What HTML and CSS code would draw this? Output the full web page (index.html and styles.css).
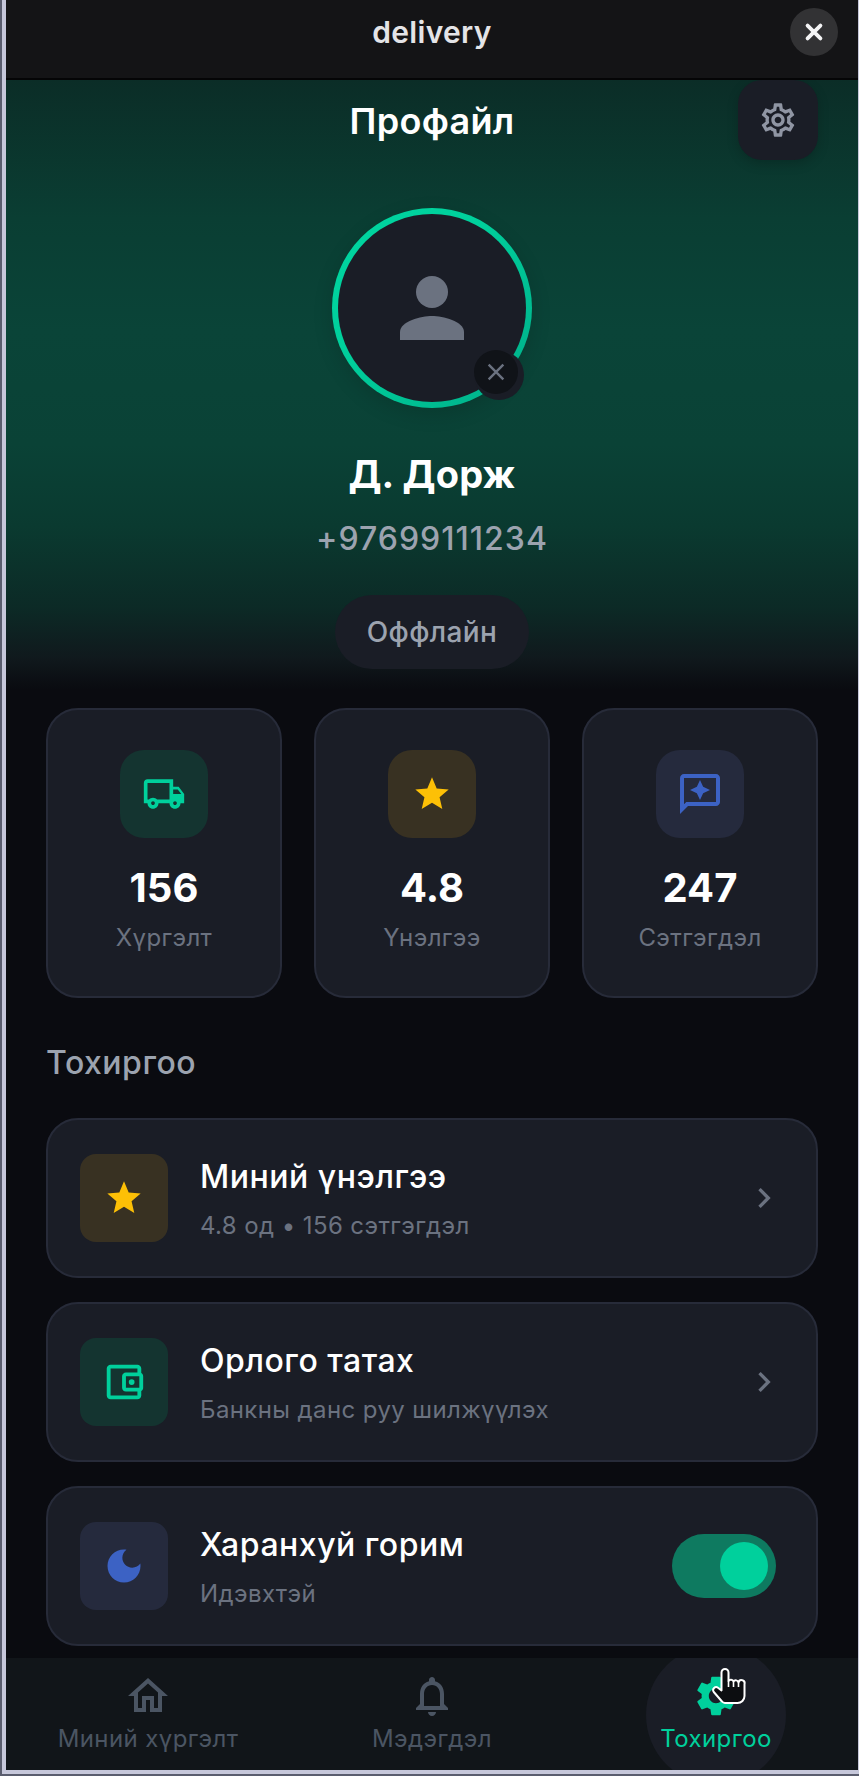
FILE: index.html
```html
<!DOCTYPE html>
<html lang="mn">
<head>
<meta charset="utf-8">
<title>delivery</title>
<link rel="stylesheet" href="styles.css">
</head>
<body>
<div class="window">
  <div class="app">
    <header class="topbar">
      <span class="topbar-title">delivery</span>
      <button class="close-btn" aria-label="close">
        <svg viewBox="0 0 24 24" class="close-icon"><path d="M5 5l14 14M19 5L5 19"/></svg>
      </button>
    </header>
    <main class="main">
      <section class="hero">
        <div class="hero-bar">
          <h1 class="hero-title">Профайл</h1>
          <button class="settings-btn" aria-label="settings">
            <svg viewBox="0 0 24 24" class="icon-40 fill-gray"><path d="M19.43 12.98c.04-.32.07-.64.07-.98 0-.34-.03-.66-.07-.98l2.11-1.65c.19-.15.24-.42.12-.64l-2-3.46c-.09-.16-.26-.25-.44-.25-.06 0-.12.01-.17.03l-2.49 1c-.52-.4-1.08-.73-1.69-.98l-.38-2.65C14.46 2.18 14.25 2 14 2h-4c-.25 0-.46.18-.49.42l-.38 2.65c-.61.25-1.17.59-1.69.98l-2.49-1c-.06-.02-.12-.03-.18-.03-.17 0-.34.09-.43.25l-2 3.46c-.13.22-.07.49.12.64l2.11 1.65c-.04.32-.07.65-.07.98 0 .33.03.66.07.98l-2.11 1.65c-.19.15-.24.42-.12.64l2 3.46c.09.16.26.25.44.25.06 0 .12-.01.17-.03l2.49-1c.52.4 1.08.73 1.69.98l.38 2.65c.03.24.24.42.49.42h4c.25 0 .46-.18.49-.42l.38-2.65c.61-.25 1.17-.59 1.69-.98l2.49 1c.06.02.12.03.18.03.17 0 .34-.09.43-.25l2-3.46c.12-.22.07-.49-.12-.64l-2.11-1.65zm-1.98-1.71c.04.31.05.52.05.73 0 .21-.02.43-.05.73l-.14 1.13.89.7 1.08.84-.7 1.21-1.27-.51-1.04-.42-.9.68c-.43.32-.84.56-1.25.73l-1.06.43-.16 1.13-.2 1.35h-1.4l-.19-1.35-.16-1.13-1.06-.43c-.43-.18-.83-.41-1.23-.71l-.91-.7-1.06.43-1.27.51-.7-1.21 1.08-.84.89-.7-.14-1.13c-.03-.31-.05-.54-.05-.74s.02-.43.05-.73l.14-1.13-.89-.7-1.08-.84.7-1.21 1.27.51 1.04.42.9-.68c.43-.32.84-.56 1.25-.73l1.06-.43.16-1.13.2-1.35h1.39l.19 1.35.16 1.13 1.06.43c.43.18.83.41 1.23.71l.91.7 1.06-.43 1.27-.51.7 1.21-1.07.85-.89.7.14 1.13zM12 8c-2.21 0-4 1.79-4 4s1.79 4 4 4 4-1.79 4-4-1.79-4-4-4zm0 6c-1.1 0-2-.9-2-2s.9-2 2-2 2 .9 2 2-.9 2-2 2z"/></svg>
          </button>
        </div>
        <div class="avatar">
          <div class="avatar-inner">
            <svg viewBox="0 0 24 24" class="icon-96"><circle cx="12" cy="8" r="4"/><path d="M4 20v-2c0-2.66 5.33-4 8-4s8 1.34 8 4v2z"/></svg>
          </div>
          <div class="avatar-badge">
            <div class="avatar-badge-inner">
              <svg viewBox="0 0 24 24" class="badge-icon"><path d="M4 4l16 16M20 4L4 20"/></svg>
            </div>
          </div>
        </div>
        <h2 class="name">Д. Дорж</h2>
        <p class="phone">+97699111234</p>
        <div class="status-pill">Оффлайн</div>
      </section>

      <section class="stats">
        <article class="stat-card">
          <div class="icon-box tint-green">
            <svg viewBox="0 0 24 24" class="icon-44 fill-green"><path d="M20 8h-3V4H3c-1.1 0-2 .9-2 2v11h2c0 1.66 1.34 3 3 3s3-1.34 3-3h6c0 1.66 1.34 3 3 3s3-1.34 3-3h2v-5l-3-4zm-.5 1.5l1.96 2.5H17V9.5h2.5zM6 18c-.55 0-1-.45-1-1s.45-1 1-1 1 .45 1 1-.45 1-1 1zm2.22-3c-.55-.61-1.33-1-2.22-1s-1.67.39-2.22 1H3V6h12v9H8.22zM18 18c-.55 0-1-.45-1-1s.45-1 1-1 1 .45 1 1-.45 1-1 1z"/></svg>
          </div>
          <div class="stat-value">156</div>
          <div class="stat-label">Хүргэлт</div>
        </article>
        <article class="stat-card">
          <div class="icon-box tint-amber">
            <svg viewBox="0 0 24 24" class="icon-40 fill-amber"><path d="M12 17.27L18.18 21l-1.64-7.03L22 9.24l-7.19-.61L12 2 9.19 8.63 2 9.24l5.46 4.73L5.82 21z"/></svg>
          </div>
          <div class="stat-value">4.8</div>
          <div class="stat-label">Үнэлгээ</div>
        </article>
        <article class="stat-card">
          <div class="icon-box tint-blue">
            <svg viewBox="0 0 24 24" class="icon-48 fill-blue"><path d="M20 4v12H5.17L4 17.17V4h16m0-2H4c-1.1 0-1.99.9-1.99 2L2 22l4-4h14c1.1 0 2-.9 2-2V4c0-1.1-.9-2-2-2z"/><path d="M12 15l1.57-3.43L17 10l-3.43-1.57L12 5l-1.57 3.43L7 10l3.43 1.57z"/></svg>
          </div>
          <div class="stat-value">247</div>
          <div class="stat-label">Сэтгэгдэл</div>
        </article>
      </section>

      <h3 class="section-title">Тохиргоо</h3>

      <section class="list">
        <article class="row">
          <div class="icon-box tint-amber">
            <svg viewBox="0 0 24 24" class="icon-40 fill-amber"><path d="M12 17.27L18.18 21l-1.64-7.03L22 9.24l-7.19-.61L12 2 9.19 8.63 2 9.24l5.46 4.73L5.82 21z"/></svg>
          </div>
          <div class="row-text">
            <div class="row-title">Миний үнэлгээ</div>
            <div class="row-sub">4.8 од • 156 сэтгэгдэл</div>
          </div>
          <svg viewBox="0 0 24 24" class="icon-40 fill-muted"><path d="M10 6L8.59 7.41 13.17 12l-4.58 4.59L10 18l6-6z"/></svg>
        </article>
        <article class="row">
          <div class="icon-box tint-green">
            <svg viewBox="0 0 24 24" class="icon-46 fill-green"><path d="M21 7.28V5c0-1.1-.9-2-2-2H5c-1.11 0-2 .9-2 2v14c0 1.1.89 2 2 2h14c1.1 0 2-.9 2-2v-2.28c.59-.35 1-.98 1-1.72V9c0-.74-.41-1.38-1-1.72zM20 9v6h-7V9h7zM5 19V5h14v2h-6c-1.1 0-2 .9-2 2v6c0 1.1.9 2 2 2h6v2H5z"/><circle cx="16" cy="12" r="1.5"/></svg>
          </div>
          <div class="row-text">
            <div class="row-title">Орлого татах</div>
            <div class="row-sub">Банкны данс руу шилжүүлэх</div>
          </div>
          <svg viewBox="0 0 24 24" class="icon-40 fill-muted"><path d="M10 6L8.59 7.41 13.17 12l-4.58 4.59L10 18l6-6z"/></svg>
        </article>
        <article class="row">
          <div class="icon-box tint-blue">
            <svg viewBox="0 0 24 24" class="icon-44 fill-blue"><path d="M12 3c-4.97 0-9 4.03-9 9s4.03 9 9 9 9-4.03 9-9c0-.46-.04-.92-.1-1.36-.98 1.37-2.58 2.26-4.4 2.26-2.98 0-5.4-2.42-5.4-5.4 0-1.81.89-3.42 2.26-4.4-.44-.06-.9-.1-1.36-.1z"/></svg>
          </div>
          <div class="row-text">
            <div class="row-title">Харанхуй горим</div>
            <div class="row-sub">Идэвхтэй</div>
          </div>
          <div class="toggle"><div class="toggle-thumb"></div></div>
        </article>
      </section>
    </main>

    <nav class="nav">
      <div class="nav-item">
        <svg viewBox="0 0 24 24" class="icon-48 fill-nav"><path d="M12 5.69l5 4.5V18h-2v-6H9v6H7v-7.81l5-4.5M12 3L2 12h3v8h6v-6h2v6h6v-8h3L12 3z"/></svg>
        <span class="nav-label">Миний хүргэлт</span>
      </div>
      <div class="nav-item">
        <svg viewBox="0 0 24 24" class="icon-48 fill-nav"><path d="M12 22c1.1 0 2-.9 2-2h-4c0 1.1.9 2 2 2zm6-6v-5c0-3.07-1.63-5.64-4.5-6.32V4c0-.83-.67-1.5-1.5-1.5s-1.5.67-1.5 1.5v.68C7.64 5.36 6 7.92 6 11v5l-2 2v1h16v-1l-2-2zm-2 1H8v-6c0-2.48 1.51-4.5 4-4.5s4 2.02 4 4.5v6z"/></svg>
        <span class="nav-label">Мэдэгдэл</span>
      </div>
      <div class="nav-item nav-item-active">
        <div class="nav-bubble"></div>
        <svg viewBox="0 0 24 24" class="icon-48 fill-green nav-content"><path d="M19.14 12.94c.04-.3.06-.61.06-.94 0-.32-.02-.64-.07-.94l2.03-1.58c.18-.14.23-.41.12-.61l-1.92-3.32c-.12-.22-.37-.29-.59-.22l-2.39.96c-.5-.38-1.03-.7-1.62-.94l-.36-2.54c-.04-.24-.24-.41-.48-.41h-3.84c-.24 0-.43.17-.47.41l-.36 2.54c-.59.24-1.13.57-1.62.94l-2.39-.96c-.22-.08-.47 0-.59.22L2.74 8.87c-.12.21-.08.47.12.61l2.03 1.58c-.05.3-.09.63-.09.94s.02.64.07.94l-2.03 1.58c-.18.14-.23.41-.12.61l1.92 3.32c.12.22.37.29.59.22l2.39-.96c.5.38 1.03.7 1.62.94l.36 2.54c.05.24.24.41.48.41h3.84c.24 0 .44-.17.47-.41l.36-2.54c.59-.24 1.13-.56 1.62-.94l2.39.96c.22.08.47 0 .59-.22l1.92-3.32c.12-.22.07-.47-.12-.61l-2.01-1.58zM12 15.6c-1.98 0-3.6-1.62-3.6-3.6s1.62-3.6 3.6-3.6 3.6 1.62 3.6 3.6-1.62 3.6-3.6 3.6z"/></svg>
        <span class="nav-label nav-content">Тохиргоо</span>
        <svg viewBox="0 0 36 37" class="cursor"><path d="M9.5 4.5a3.5 3.5 0 0 1 7 0v8.5a2.8 2.8 0 0 1 5 .5a2.8 2.8 0 0 1 5 1a2.8 2.8 0 0 1 6 1.5V28a7 7 0 0 1-7 7H13a4 4 0 0 1-3-1.5L1.8 24a3 3 0 0 1 4.2-4.2l3.5 2.7z"/><path class="cursor-knuckle" d="M16.5 13v6M21.5 13.5V19M26.5 14.5V19"/></svg>
      </div>
    </nav>
  </div>
</div>
</body>
</html>
```

FILE: styles.css
```css
* { box-sizing: border-box; }
html, body { margin: 0; padding: 0; height: 100%; background: #5a5d6e; overflow: hidden; }
body { font-family: "Inter", "Noto Sans", sans-serif; color: #fff; }
h1, h2, h3, p { margin: 0; font-weight: inherit; }
button { border: 0; padding: 0; font: inherit; }

.window { width: 859px; height: 1776px; padding: 0 0 2px 2px; }
.app {
  height: 100%;
  display: flex;
  flex-direction: column;
  background: #0a0b10;
  border-left: 4px solid #c6c7da;
  border-right: 1px solid #c6c7da;
  border-bottom: 4px solid #c6c7da;
  overflow: hidden;
}

.topbar {
  flex: none;
  height: 80px;
  padding-bottom: 14px;
  border-bottom: 2px solid #050506;
  background: #141416;
  display: flex;
  align-items: center;
  justify-content: center;
  position: relative;
}
.topbar-title { font-size: 30px; line-height: 36px; font-weight: 600; color: #e4e4e7; letter-spacing: 0.3px; }
.close-btn {
  position: absolute;
  right: 20px;
  top: 8px;
  width: 48px;
  height: 48px;
  border-radius: 50%;
  background: #323234;
  display: flex;
  align-items: center;
  justify-content: center;
}
.close-icon { width: 22px; height: 22px; fill: none; stroke: #f4f4f5; stroke-width: 4.2; stroke-linecap: round; }

.main { flex: 1; min-height: 0; overflow: hidden; }

.hero {
  height: 628px;
  display: flex;
  flex-direction: column;
  align-items: center;
  background: linear-gradient(180deg, #0b2d27 0%, #0a3e33 22%, #0a4438 40%, #0a4236 58%, #0a3a30 71%, #0c2a26 84%, #10191d 92%, #0a0b10 97%);
}
.hero-bar {
  width: 100%;
  height: 80px;
  padding: 0 40px 0;
  display: flex;
  align-items: center;
  justify-content: center;
  position: relative;
}
.hero-title { font-size: 36px; font-weight: 600; line-height: 44px; letter-spacing: 0.3px; margin-top: 2px; }
.settings-btn {
  position: absolute;
  right: 40px;
  top: 0;
  width: 80px;
  height: 80px;
  border-radius: 24px;
  background: #1a1d26;
  box-shadow: 0 4px 12px rgba(0, 0, 0, 0.18);
  display: flex;
  align-items: center;
  justify-content: center;
}

.avatar {
  position: relative;
  width: 200px;
  height: 200px;
  margin-top: 48px;
  padding: 6px;
  border-radius: 50%;
  background: linear-gradient(135deg, #00d6a0 0%, #00d09c 40%, #00ae89 100%);
  box-shadow: 0 6px 20px rgba(0, 0, 0, 0.14);
}
.avatar-inner {
  width: 100%;
  height: 100%;
  border-radius: 50%;
  background: #1a1d26;
  display: flex;
  align-items: center;
  justify-content: center;
}
.avatar-badge {
  position: absolute;
  left: 142px;
  top: 142px;
  width: 50px;
  height: 50px;
  border-radius: 50%;
  background: #1a1d26;
}
.avatar-badge-inner {
  width: 44px;
  height: 44px;
  border-radius: 50%;
  background: #101318;
  display: flex;
  align-items: center;
  justify-content: center;
}
.badge-icon { width: 22px; height: 22px; fill: none; stroke: #6b7280; stroke-width: 2.6; }

.name { margin-top: 44px; font-size: 38px; line-height: 44px; font-weight: 700; letter-spacing: 0.2px; }
.phone { margin-top: 25px; font-size: 32px; line-height: 36px; color: #9ca3af; letter-spacing: 1px; font-weight: 500; }
.status-pill {
  margin-top: 38px;
  height: 74px;
  padding: 0 32px;
  border-radius: 37px;
  background: #1a1d26;
  color: #9ca3af;
  font-size: 28px;
  font-weight: 500;
  letter-spacing: 0.4px;
  display: flex;
  align-items: center;
}

.stats {
  padding: 0 40px;
  display: grid;
  grid-template-columns: repeat(3, 1fr);
  gap: 32px;
}
.stat-card {
  height: 290px;
  padding-top: 40px;
  border: 2px solid #272b39;
  border-radius: 32px;
  background: #1a1d26;
  display: flex;
  flex-direction: column;
  align-items: center;
}
.icon-box {
  flex: none;
  width: 88px;
  height: 88px;
  border-radius: 24px;
  display: flex;
  align-items: center;
  justify-content: center;
}
.tint-green { background: #143430; }
.tint-amber { background: #383122; }
.tint-blue { background: #252a3d; }
.stat-value { margin-top: 26px; font-size: 40px; line-height: 48px; font-weight: 700; }
.stat-label { margin-top: 10px; font-size: 24px; line-height: 32px; color: #6b7280; letter-spacing: 0.4px; }

.section-title { margin: 45px 40px 35px; font-size: 32px; line-height: 40px; font-weight: 500; color: #9ca3af; letter-spacing: 0.5px; }

.list { padding: 0 40px; display: flex; flex-direction: column; gap: 24px; }
.row {
  height: 160px;
  padding: 0 32px;
  border: 2px solid #272b39;
  border-radius: 32px;
  background: #1a1d26;
  display: flex;
  align-items: center;
  gap: 32px;
}
.row .icon-box { border-radius: 16px; }
.row-text { flex: 1; min-width: 0; padding-top: 3px; }
.row-title { font-size: 32px; line-height: 38px; font-weight: 500; color: #fff; letter-spacing: 0.5px; }
.row-sub { margin-top: 14px; font-size: 24px; line-height: 32px; color: #6b7280; letter-spacing: 0.4px; }

.toggle {
  flex: none;
  width: 104px;
  height: 64px;
  margin-right: 8px;
  padding: 8px;
  border-radius: 32px;
  background: #0e7a60;
  display: flex;
  justify-content: flex-end;
}
.toggle-thumb { width: 48px; height: 48px; border-radius: 50%; background: #00d09c; }

.nav {
  flex: none;
  height: 112px;
  background: #111519;
  display: grid;
  grid-template-columns: repeat(3, 1fr);
  overflow: hidden;
}
.nav-item {
  position: relative;
  padding-top: 14px;
  display: flex;
  flex-direction: column;
  align-items: center;
}
.nav-bubble {
  position: absolute;
  left: 50%;
  top: -13px;
  width: 140px;
  height: 140px;
  margin-left: -70px;
  border-radius: 50%;
  background: #1a1d26;
}
.nav-content { position: relative; }
.nav-label { margin-top: 3px; font-size: 24px; line-height: 32px; color: #4b5563; letter-spacing: 0.4px; }
.nav-item-active .nav-label { color: #00d09c; }
.cursor {
  position: absolute;
  left: 138px;
  top: 10px;
  width: 36px;
  height: 37px;
  fill: #0c0d10;
  stroke: #fff;
  stroke-width: 2;
  stroke-linejoin: round;
}
.cursor-knuckle { fill: none; stroke-width: 1.6; }

.icon-40 { width: 40px; height: 40px; flex: none; }
.icon-44 { width: 44px; height: 44px; flex: none; }
.icon-46 { width: 46px; height: 46px; flex: none; }
.icon-48 { width: 48px; height: 48px; flex: none; }
.icon-96 { width: 96px; height: 96px; fill: #6b7280; }
.fill-gray { fill: #8f95a3; }
.fill-green { fill: #00d09c; }
.fill-amber { fill: #fdc006; }
.fill-blue { fill: #3c62c4; }
.fill-muted { fill: #6b7280; }
.fill-nav { fill: #4b5563; }
```
